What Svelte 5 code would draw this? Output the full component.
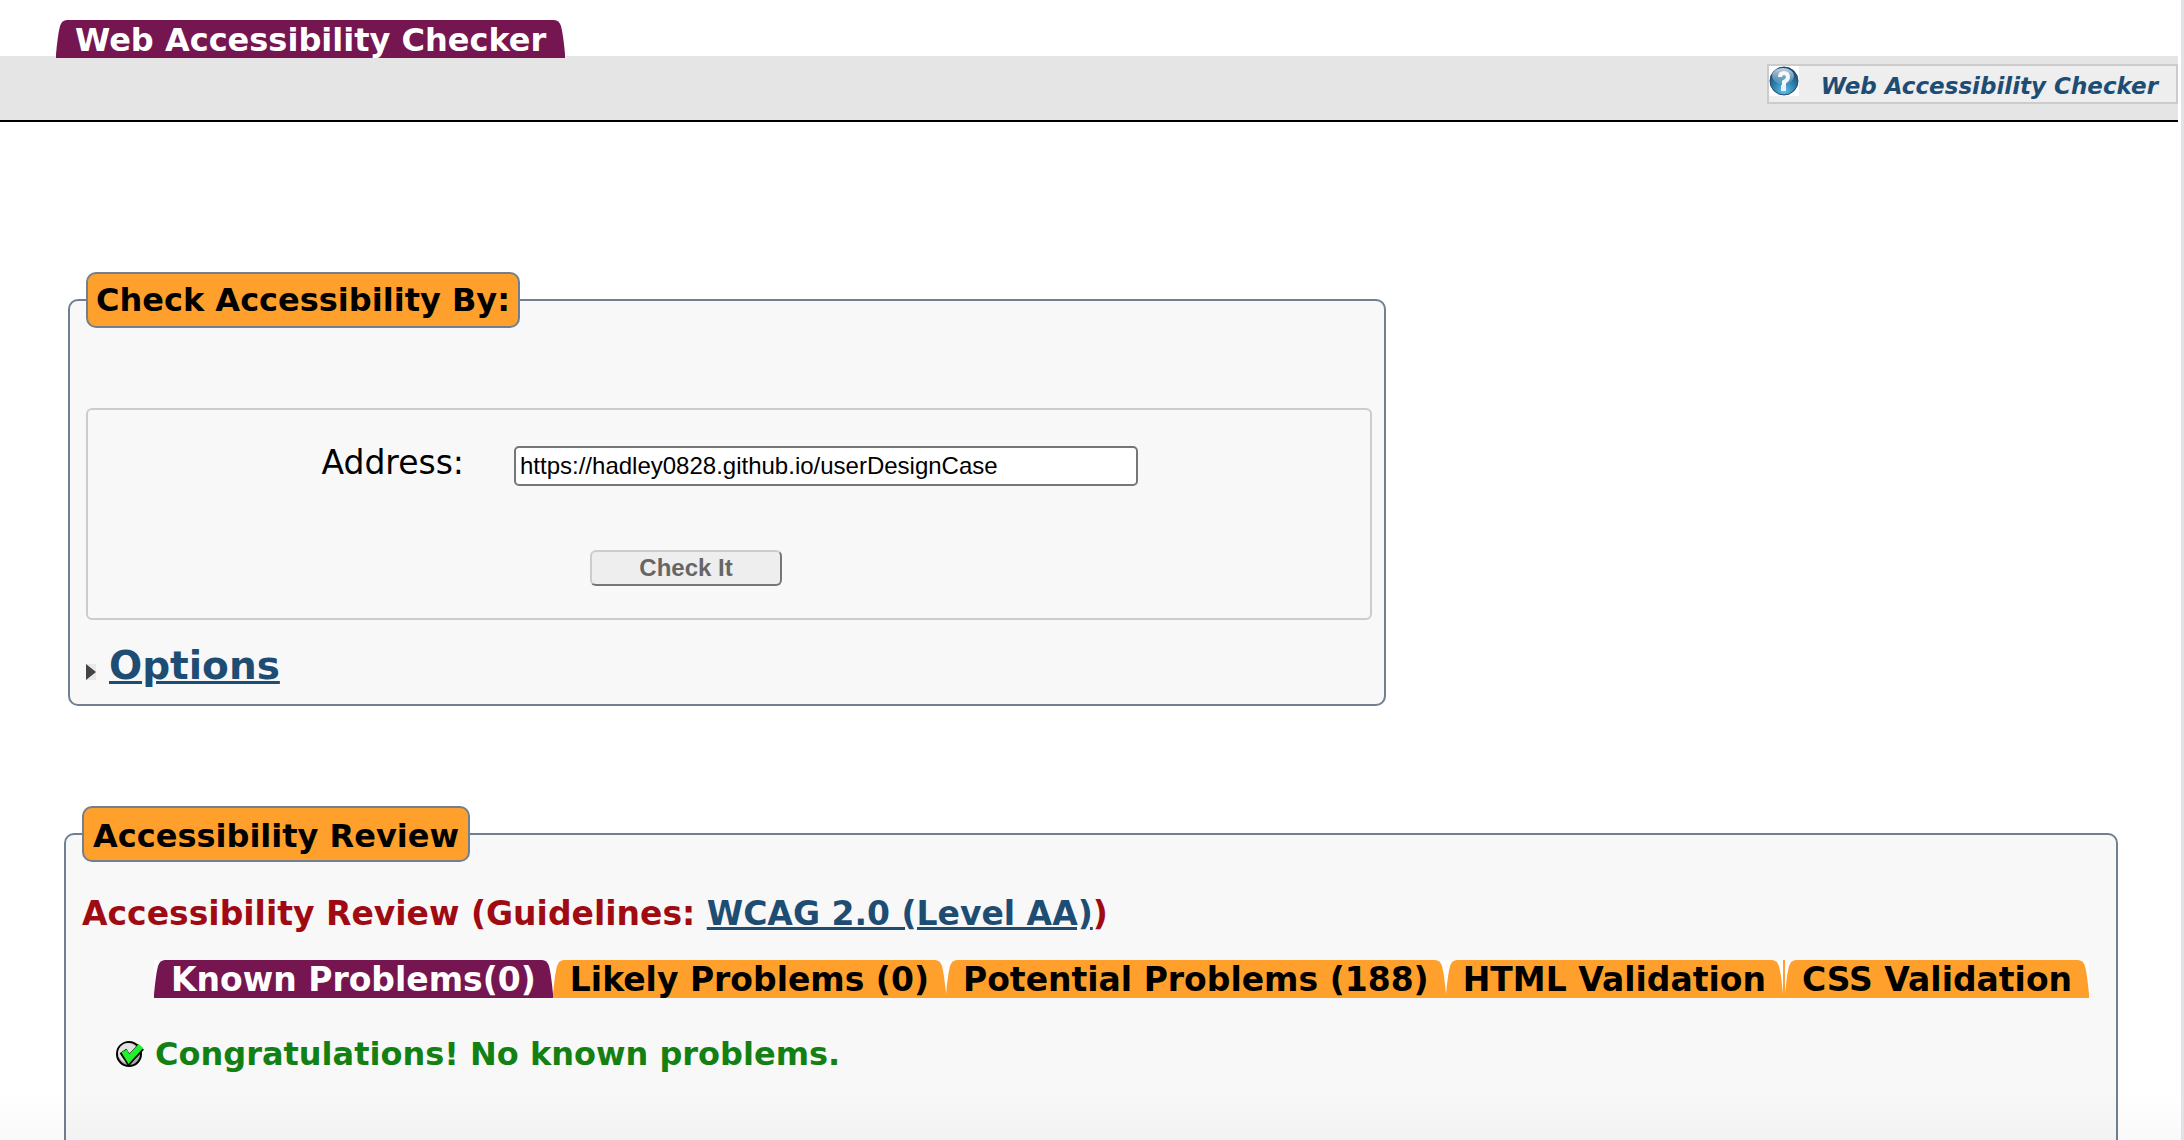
<script>
  let address = $state('https://hadley0828.github.io/userDesignCase');
  const tabs = ['Known Problems(0)', 'Likely Problems (0)', 'Potential Problems (188)', 'HTML Validation', 'CSS Validation'];
  let active = $state(0);
</script>

{#snippet tabEnd(flip)}
  <svg class="end" class:flip viewBox="0 0 12 38" aria-hidden="true">
    <rect width="12" height="38" fill="#fff" />
    <path d="M0 38V34C1 24 2 14 4 6Q6 0 11 0H12V38Z" fill="currentColor" />
  </svg>
{/snippet}

<div class="page">
  <header>
    <div class="brand">
      {@render tabEnd(false)}
      <h1>Web Accessibility Checker</h1>
      {@render tabEnd(true)}
    </div>
    <div class="bar">
      <a class="help" href="#help">
        <svg viewBox="0 0 30 30" aria-hidden="true">
          <defs>
            <radialGradient id="ball" cx="50%" cy="85%" r="80%">
              <stop offset="0" stop-color="#5fc0e8" />
              <stop offset="0.5" stop-color="#2f7fae" />
              <stop offset="1" stop-color="#163f68" />
            </radialGradient>
            <linearGradient id="shine" x1="0" y1="0" x2="0" y2="1">
              <stop offset="0" stop-color="#e4f2f8" stop-opacity="0.85" />
              <stop offset="1" stop-color="#a9d2e6" stop-opacity="0.2" />
            </linearGradient>
          </defs>
          <rect width="30" height="30" fill="#fff" />
          <circle cx="15" cy="15" r="14" fill="url(#ball)" stroke="#1d4a74" stroke-width="1" />
          <ellipse cx="14" cy="10" rx="11" ry="8" fill="url(#shine)" />
          <path d="M11 11Q11 7 15 7T19 11Q19 14 15 16V19" fill="none" stroke="#f4f9fc" stroke-width="4" />
          <rect x="12" y="19" width="5" height="6" fill="#e6f4fa" />
        </svg>
        <em>Web Accessibility Checker</em>
      </a>
    </div>
  </header>

  <main>
    <fieldset class="panel check">
      <legend>Check Accessibility By:</legend>
      <form class="box" onsubmit={(e) => e.preventDefault()}>
        <div class="row">
          <label for="address">Address:</label>
          <input id="address" type="text" bind:value={address} />
        </div>
        <button class="submit" type="submit">Check It</button>
      </form>
      <h2 class="options">
        <svg viewBox="0 0 10 16" aria-hidden="true"><rect width="10" height="16" fill="#e8e8ee" /><path d="M0 0L10 8L0 16Z" fill="#444" /></svg>
        <a href="#options">Options</a>
      </h2>
    </fieldset>

    <fieldset class="panel review">
      <legend>Accessibility Review</legend>
      <h3>Accessibility Review (Guidelines: <a href="#guideline">WCAG 2.0 (Level AA)</a>)</h3>
      <div class="tabs" role="tablist">
        {#each tabs as tab, i}
          <button class="tab" class:active={active === i} role="tab" aria-selected={active === i} onclick={() => (active = i)}>
            {@render tabEnd(false)}<span>{tab}</span>{@render tabEnd(true)}
          </button>
        {/each}
      </div>
      <p class="ok">
        <svg viewBox="0 0 28 26" aria-hidden="true">
          <circle cx="13" cy="13" r="12" fill="#a8a8a8" stroke="#000" stroke-width="2" />
          <circle cx="12" cy="12" r="10" fill="#e2e2e2" />
          <path d="M7 10L13 19L25 6" fill="none" stroke="#000" stroke-width="8" />
          <path d="M8 10L13 18L25 5" fill="none" stroke="#22f02c" stroke-width="6" />
        </svg>
        Congratulations! No known problems.
      </p>
    </fieldset>
  </main>
  <div class="fade"></div>
</div>

<style>
  :global(body) { background: #fff; overflow: hidden; }
  .page {
    position: relative;
    box-sizing: border-box;
    height: 100vh;
    overflow: hidden;
    padding-right: 3px;
    border-right: 3px solid #dfe3e3;
    font-family: Verdana, "DejaVu Sans", sans-serif;
    font-size: 32px;
    line-height: 38px;
    color: #000;
  }
  /* soft shade over the lower edge of the window */
  .fade {
    position: absolute;
    inset: auto 0 0 0;
    height: 48px;
    background: linear-gradient(rgba(0, 0, 0, 0), rgba(0, 0, 0, 0.024));
    pointer-events: none;
  }
  a { color: #1e4d74; }
  h1, h2, h3, p { margin: 0; font-size: 32px; font-weight: bold; }
  .end { display: block; flex: none; width: 12px; height: 38px; }
  .end.flip { transform: scaleX(-1); }
  header { padding-top: 20px; }
  .brand { display: flex; width: max-content; margin: 0 0 -2px 56px; position: relative; color: #761650; height: 38px; }
  .brand h1 { box-sizing: border-box; height: 38px; background: #761650; color: #fff; padding: 1px 7px 0; }
  .bar {
    box-sizing: border-box;
    display: flex;
    justify-content: flex-end;
    padding: 8px 0 16px;
    background: #e5e5e5;
    border-bottom: 2px solid #000;
  }
  .help {
    display: flex;
    height: 36px;
    border: 2px solid #ccc;
    background: #eee;
    padding-right: 18px;
    gap: 22px;
    font-size: 23px;
    line-height: 40px;
    font-weight: bold;
    text-decoration: none;
  }
  .help svg { width: 30px; height: 30px; }
  main { padding: 150px 60px 0 64px; }
  .panel {
    box-sizing: border-box;
    margin: 0;
    min-width: 0;
    border: 2px solid #708090;
    border-radius: 10px;
    background: #f8f8f8;
  }
  legend {
    box-sizing: border-box;
    height: 56px;
    padding: 7px 8px;
    border: 2px solid #708090;
    border-radius: 10px;
    background: #ffa02c;
    font-weight: bold;
  }
  .check { width: 65%; max-width: 1318px; margin-left: 4px; padding: 80px 12px 15px 16px; }
  .box { border: 2px solid #ccc; border-radius: 6px; padding: 32px 0; display: flex; flex-direction: column; height: 144px; justify-content: space-between; }
  .row { display: flex; align-items: flex-end; height: 44px; }
  label { width: 376px; text-align: right; margin-right: 50px; font-size: 33px; line-height: 46px; }
  input {
    box-sizing: border-box;
    width: 624px;
    height: 40px;
    padding: 2px 4px;
    border: 2px solid #767676;
    border-radius: 5px;
    background: #fff;
    font: 24px "Liberation Sans", Arial, sans-serif;
    color: #000;
  }
  .submit {
    width: 192px;
    height: 36px;
    margin-left: 502px;
    padding: 0;
    border: 2px solid #ccc;
    border-right-color: #767676;
    border-bottom-color: #767676;
    border-radius: 6px;
    background: #eee;
    color: #666;
    font: bold 24px "Liberation Sans", Arial, sans-serif;
  }
  .options { display: flex; align-items: center; gap: 13px; padding-top: 23px; font-size: 39px; line-height: 46px; }
  .options svg { width: 10px; height: 16px; margin-top: 12px; }
  .review { margin-top: 100px; padding: 33px 16px 160px; }
  .review legend { padding: 9px 9px 5px; }
  h3 { color: #a00a12; font-size: 33px; }
  .tabs { display: flex; margin: 27px 0 0 72px; }
  .tab {
    display: flex;
    flex: none;
    height: 38px;
    padding: 0;
    border: 0;
    background: none;
    color: #ffa02c;
    font: bold 33px/40px Verdana, "DejaVu Sans", sans-serif;
    white-space: nowrap;
  }
  .tab:last-child { border-left: 2px solid #ffa02c; }
  .tab span { height: 38px; background: #ffa02c; color: #000; padding: 0 5px; }
  .tab.active { color: #761650; }
  .tab.active span { background: #761650; color: #fff; }
  .ok { display: flex; align-items: center; gap: 11px; margin: 37px 0 0 34px; color: #138013; }
  .ok svg { width: 28px; height: 26px; }
</style>
